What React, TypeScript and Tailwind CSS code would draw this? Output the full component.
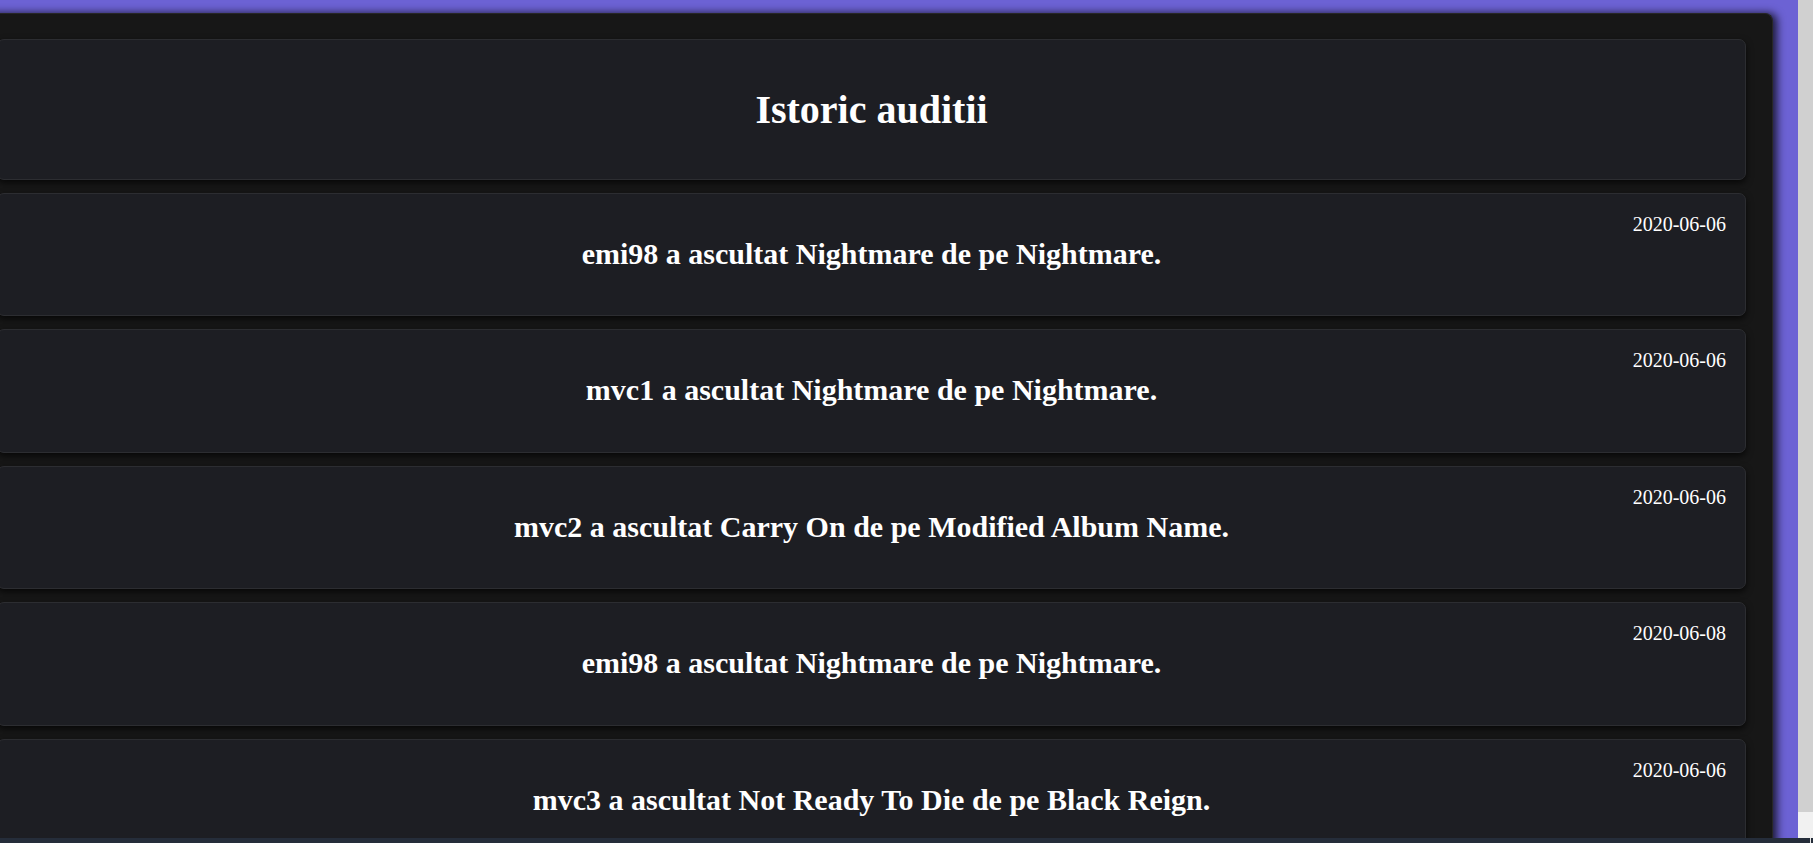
import { FC } from 'react';

type Listen = {
  user: string;
  song: string;
  album: string;
  date: string;
};

const history: Listen[] = [
  { user: 'emi98', song: 'Nightmare', album: 'Nightmare', date: '2020-06-06' },
  { user: 'mvc1', song: 'Nightmare', album: 'Nightmare', date: '2020-06-06' },
  { user: 'mvc2', song: 'Carry On', album: 'Modified Album Name', date: '2020-06-06' },
  { user: 'emi98', song: 'Nightmare', album: 'Nightmare', date: '2020-06-08' },
  { user: 'mvc3', song: 'Not Ready To Die', album: 'Black Reign', date: '2020-06-06' }
];

const HistoryCard: FC<{ item: Listen }> = ({ item }) => (
  <div className="h-[123.5px] shrink-0 rounded-[7px] border border-[#2c2d31] bg-[#1d1e23] pt-[19px] pr-[19px] pl-[19px] shadow-[0_3px_7px_rgba(0,0,0,0.7)]">
    <div className="text-right text-[20px] leading-[22px]">{item.date}</div>
    <h2 className="mt-[2px] text-center text-[30px] font-bold leading-[33px]">
      {item.user} a ascultat {item.song} de pe {item.album}.
    </h2>
  </div>
);

export default function App() {
  return (
    <div className="flex h-[843px] w-full flex-col overflow-hidden font-['Liberation_Serif',serif] text-white">
      <div className="flex h-[838px] shrink-0">
        <div className="flex-1 overflow-hidden bg-[#6c62d4] pt-[13px]">
          <div className="ml-[-29px] mr-[25px] h-[900px] rounded-tr-lg border-t border-r border-[#272727] bg-[#171717] pt-[25px] pr-[26px] pl-[26px] shadow-[4px_0_8px_rgba(0,0,0,0.75)]">
            <div className="flex flex-col gap-[13px]">
              <div className="flex h-[140.5px] shrink-0 items-center justify-center rounded-[7px] border border-[#2c2d31] bg-[#1d1e23] pt-[2px] shadow-[0_3px_7px_rgba(0,0,0,0.7)]">
                <h1 className="text-[40px] font-bold leading-[44px]">Istoric auditii</h1>
              </div>
              {history.map((item, i) => (
                <HistoryCard key={i} item={item} />
              ))}
            </div>
          </div>
        </div>
        <div className="flex w-[15px] shrink-0 flex-col">
          <div className="h-[812px] bg-[#d0d0d0]" />
          <div className="flex-1 bg-[#f1f1f1]" />
        </div>
      </div>
      <div className="flex h-[5px] shrink-0">
        <div className="flex-1 bg-[#252d3a]" />
        <div className="w-px bg-[#e8e8e8]" />
        <div className="w-[2px] bg-[#252d3a]" />
      </div>
    </div>
  );
}
